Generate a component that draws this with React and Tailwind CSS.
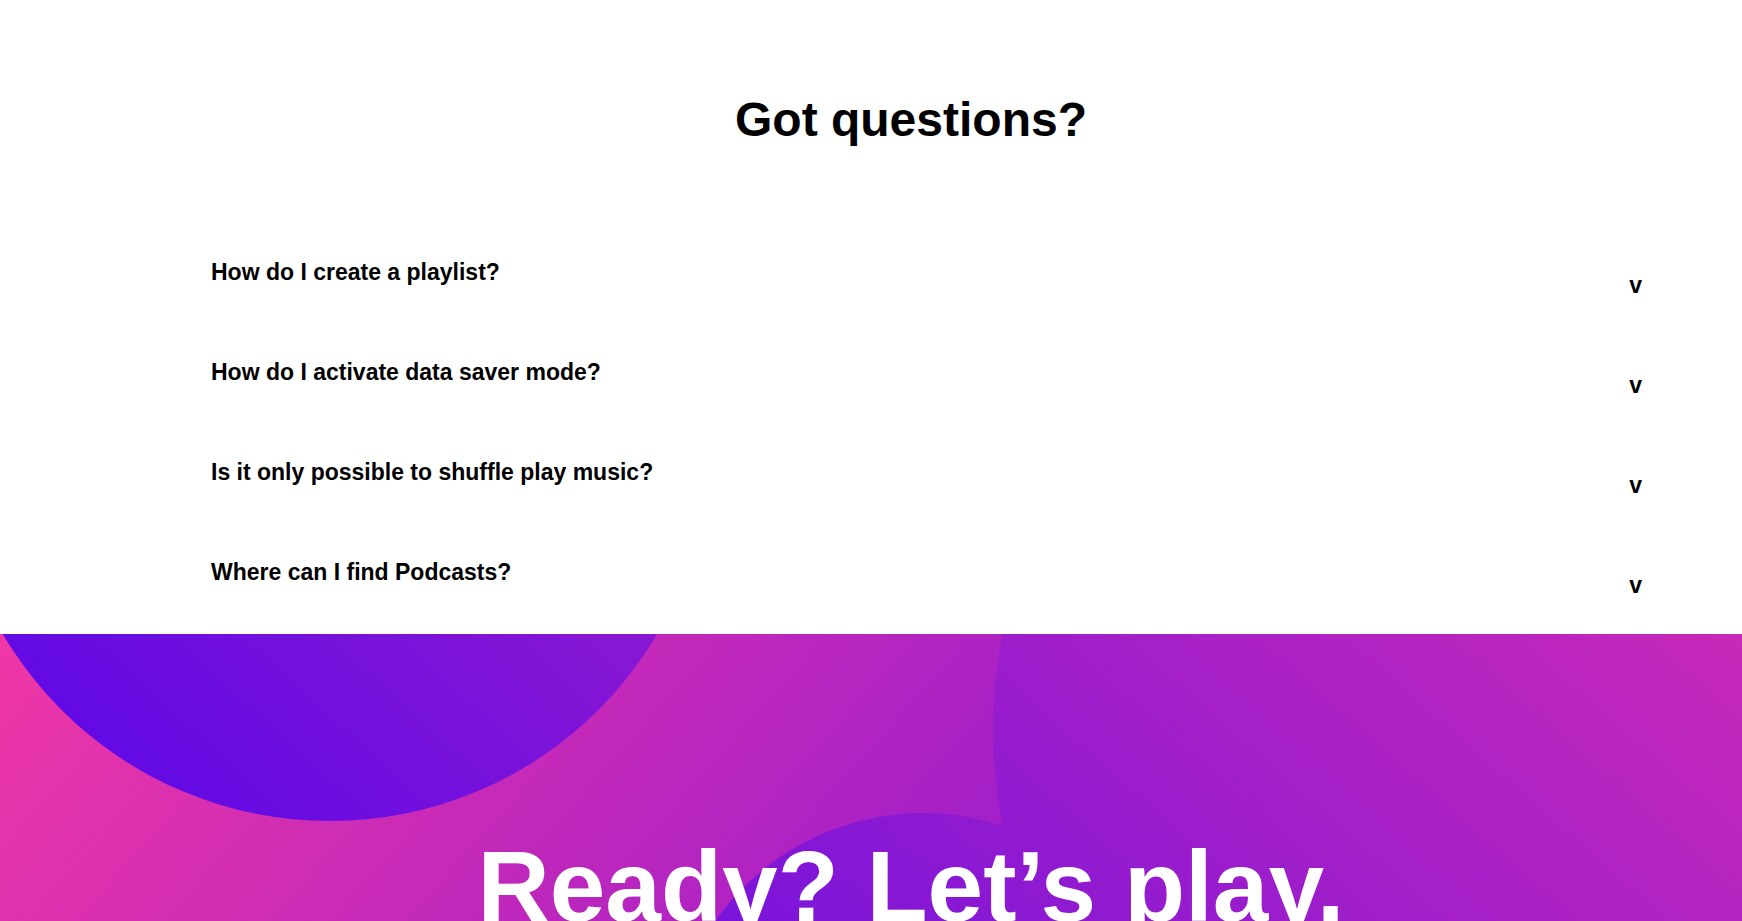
const questions = [
  "How do I create a playlist?",
  "How do I activate data saver mode?",
  "Is it only possible to shuffle play music?",
  "Where can I find Podcasts?",
];

function Faq() {
  return (
    <section className="bg-white pt-20 pb-[18px]">
      <h2 className="pt-1 pb-24 pl-20 text-center text-5xl leading-18 font-bold">Got questions?</h2>
      <ul className="flex flex-col gap-9 pr-25 pl-[211px]">
        {questions.map((question) => (
          <li key={question}>
            <button
              type="button"
              aria-expanded="false"
              className="flex h-16 w-full items-start justify-between text-left text-[23px] leading-8 font-bold"
            >
              <span className="pt-1">{question}</span>
              <span className="pt-[17px]">v</span>
            </button>
          </li>
        ))}
      </ul>
    </section>
  );
}

function Backdrop() {
  return (
    <svg
      className="absolute inset-0 h-full w-full"
      viewBox="0 0 1742 287"
      preserveAspectRatio="xMidYMin slice"
      aria-hidden="true"
    >
      <defs>
        <linearGradient id="base" gradientUnits="userSpaceOnUse" x1="0" y1="0" x2="740" y2="660">
          <stop offset="0" stopColor="#f037a5" />
          <stop offset="1" stopColor="#981ccd" />
        </linearGradient>
        <linearGradient id="left" gradientUnits="userSpaceOnUse" x1="110" y1="120" x2="422" y2="-222">
          <stop offset="0" stopColor="#620ae4" />
          <stop offset="1" stopColor="#8a18d2" />
        </linearGradient>
        <linearGradient id="right" gradientUnits="userSpaceOnUse" x1="715" y1="287" x2="1314" y2="-393">
          <stop offset="0" stopColor="#7a14da" />
          <stop offset="1" stopColor="#c829b8" />
        </linearGradient>
      </defs>
      <rect width="1742" height="287" fill="url(#base)" />
      <circle cx="330" cy="-193" r="380" fill="url(#left)" />
      <circle cx="923" cy="433" r="254" fill="url(#right)" />
      <circle cx="1473" cy="95" r="480" fill="url(#right)" />
    </svg>
  );
}

export default function App() {
  return (
    <main className="flex h-screen flex-col overflow-hidden bg-white font-['Liberation_Sans',Arial,sans-serif] text-black">
      <Faq />
      <section className="relative flex-1 overflow-hidden">
        <Backdrop />
        <h2 className="relative pt-48 pl-20 text-center text-[100px] leading-30 font-bold whitespace-nowrap text-white">
          Ready? Let’s play.
        </h2>
      </section>
    </main>
  );
}
